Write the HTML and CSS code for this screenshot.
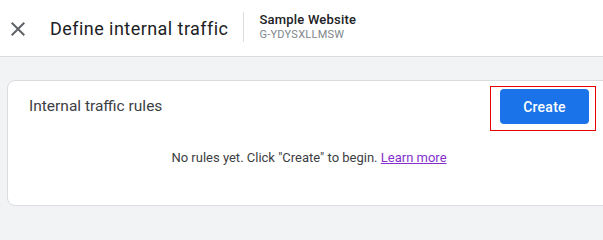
FILE: index.html
```html
<!DOCTYPE html>
<html>
<head>
<meta charset="utf-8">
<link rel="stylesheet" href="styles.css">
</head>
<body>
<header class="topbar">
  <span class="close-btn">
    <svg viewBox="0 0 24 24" width="24" height="24"><path d="M19 6.41L17.59 5 12 10.59 6.41 5 5 6.41 10.59 12 5 17.59 6.41 19 12 13.41 17.59 19 19 17.59 13.41 12z" fill="#5f6368"/></svg>
  </span>
  <h1 class="title">Define internal traffic</h1>
  <span class="divider"></span>
  <div class="stream">
    <div class="stream-name">Sample Website</div>
    <div class="stream-id">G-YDYSXLLMSW</div>
  </div>
</header>
<main class="content">
  <section class="card">
    <div class="card-head">
      <h2 class="card-title">Internal traffic rules</h2>
      <span class="highlight"><button class="create-btn">Create</button></span>
    </div>
    <p class="empty">No rules yet. Click "Create" to begin. <a class="link" href="#">Learn more</a></p>
  </section>
</main>
</body>
</html>
```
FILE: styles.css
```css
html, body {
  margin: 0;
  padding: 0;
}
body {
  width: 603px;
  height: 212px;
  overflow: hidden;
  background: #f1f3f4;
  font-family: Roboto, "Liberation Sans", Arial, sans-serif;
  color: #202124;
}
.topbar {
  height: 56px;
  background: #fff;
  border-bottom: 1px solid #dadce0;
  display: flex;
  align-items: center;
}
.close-btn {
  display: flex;
  margin-left: 6px;
  margin-top: 1px;
  width: 24px;
  height: 24px;
}
.title {
  margin: 1px 0 0 20px;
  font-size: 18px;
  font-weight: 400;
  letter-spacing: 0.45px;
  color: #202124;
  line-height: 24px;
}
.divider {
  width: 1px;
  height: 30px;
  background: #dadce0;
  margin-left: 15px;
  margin-bottom: 2px;
}
.stream {
  margin-left: 15px;
  padding-bottom: 3px;
}
.stream-name {
  font-size: 13px;
  font-weight: 500;
  letter-spacing: 0.2px;
  line-height: 16px;
  color: #202124;
}
.stream-id {
  font-size: 11px;
  letter-spacing: 0.25px;
  line-height: 14px;
  color: #80868b;
}
.content {
  padding: 23px 0 0 7px;
}
.card {
  width: 602px;
  height: 124px;
  background: #fff;
  border: 1px solid #dadce0;
  border-radius: 8px;
}
.card-head {
  display: flex;
  align-items: flex-start;
  justify-content: space-between;
  padding: 5px 14px 0 21px;
}
.card-title {
  margin: 8px 0 0;
  font-size: 15.5px;
  font-weight: 400;
  line-height: 24px;
  color: #3c4043;
}
.highlight {
  display: flex;
  border: 1px solid #e60000;
  padding: 2px 6px 6px 9px;
}
.create-btn {
  width: 89px;
  height: 35px;
  border: none;
  border-radius: 4px;
  background: #1a73e8;
  color: #fff;
  font-family: Roboto, "Liberation Sans", Arial, sans-serif;
  font-size: 14px;
  font-weight: 500;
  letter-spacing: 0.25px;
  padding: 0;
}
.empty {
  margin: 17px 0 0;
  text-align: center;
  font-size: 13px;
  line-height: 20px;
  color: #3c4043;
}
.link {
  color: #8430ce;
  text-decoration: underline;
}
```
